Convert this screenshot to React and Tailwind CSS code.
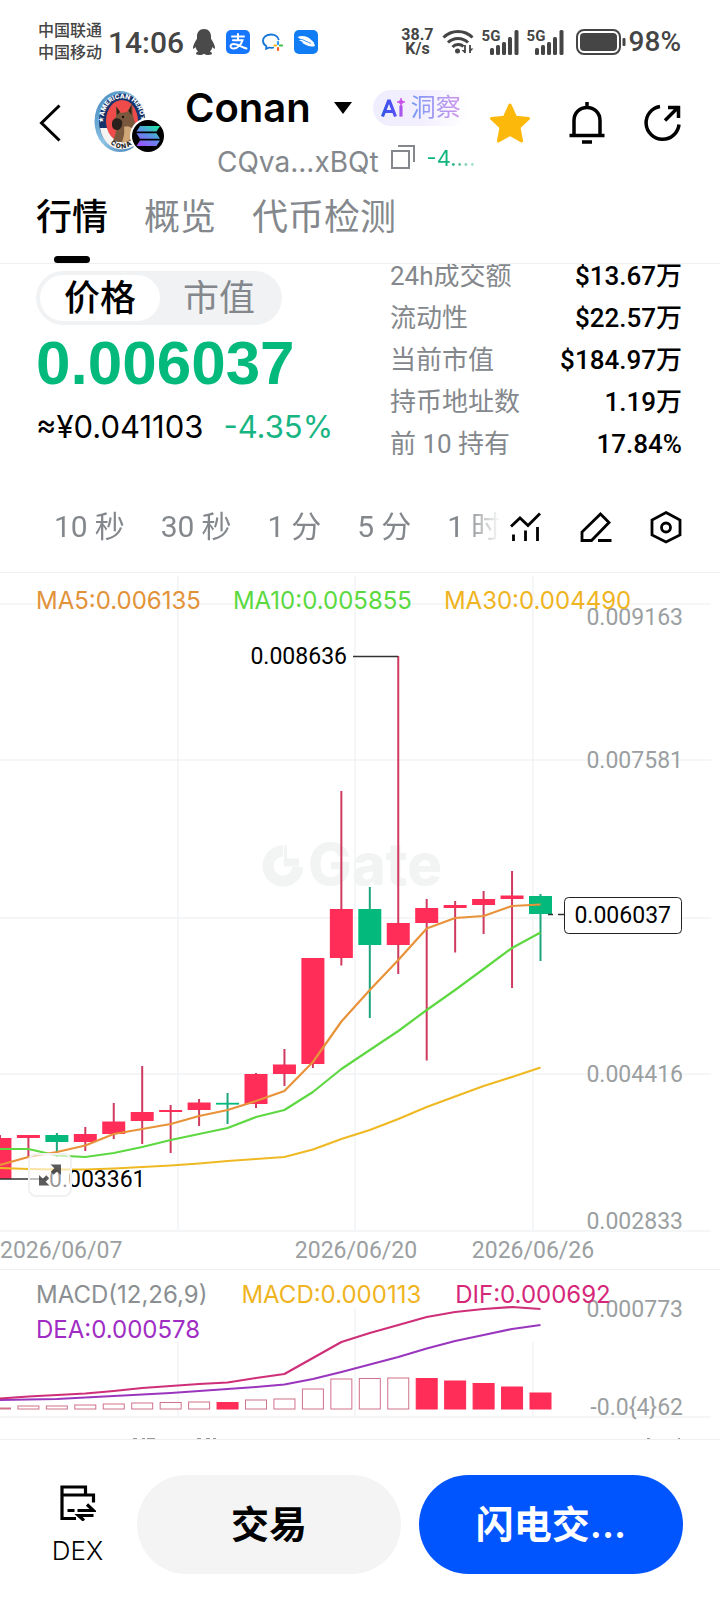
import React from "react";

const CJK = "font-[Inter,'Noto_Sans_CJK_SC',sans-serif]";
const DIN = "font-[Roboto,'Noto_Sans_CJK_SC',sans-serif]";

const STEP = 28.45;
const LAST_X = 540.5;
const slotX = (i) => LAST_X - STEP * (19 - i);

// [up, bodyTop, bodyBottom, wickTop, wickBottom]
const candles = [
  [1, 565, 606, 562, 606],
  [1, 562, 565, 562, 584],
  [0, 562, 569, 560, 584],
  [1, 561, 569, 554, 578],
  [1, 548.5, 561, 530, 566],
  [1, 539, 548, 493, 571],
  [1, 537, 539, 532, 580],
  [1, 529.5, 537, 526, 553],
  [0, 529.8, 531.6, 520, 551],
  [1, 501, 531, 500, 535],
  [1, 491.5, 501, 476, 513],
  [1, 385, 491, 385, 495],
  [1, 336, 385, 218, 392.5],
  [0, 336, 372, 314, 445],
  [1, 350, 372, 83, 401],
  [1, 335, 350, 326, 487.5],
  [1, 332, 335, 328, 379.5],
  [1, 326, 332, 318, 361],
  [1, 322.5, 326, 298, 415],
  [0, 323, 341, 321, 388],
];

const ma5 = [592, 584, 579, 572.5, 561, 556, 551, 543, 537, 528, 518, 489, 448.5, 417, 387, 355.5, 345, 343, 333, 331.5];
const ma10 = [576, 576, 582.5, 584, 580, 574, 567, 561, 555, 544, 537, 519, 496, 477, 458, 437, 417, 396, 375, 359.5];
const ma30 = [595, 596, 596.5, 596.5, 595.5, 594, 592.5, 590.5, 588, 586, 584, 576.5, 566, 557, 546, 534, 523.5, 513, 504, 494.5];

const dif = [128.5, 126.5, 125, 123.5, 121, 118, 116, 114, 112.5, 108, 104, 88, 72, 63, 55, 47, 42, 39, 37, 39];
const dea = [130, 129.5, 129, 127.5, 126, 124.5, 123, 121, 119, 117, 114.5, 109, 102, 94.5, 87, 78.5, 71, 65, 59, 55];

// [top, filled]
const bars = [
  [138, 0], [136, 0], [136, 0], [135, 0], [134, 0], [133, 0], [132.5, 0], [132, 0], [132.5, 1], [130, 0],
  [129, 0], [119, 0], [109, 0], [108.5, 0], [108, 0], [108.5, 1], [111, 1], [113.5, 1], [117, 1], [123, 1],
];

const line = (ys) => ys.map((y, i) => `${slotX(i).toFixed(1)},${y}`).join(" ");

function StatusBar() {
  return (
    <div className={`flex h-20 items-center pt-1 pr-[39px] pl-[38px] text-[#454545] ${DIN}`}>
      <div className="text-[16px] leading-[22px] font-medium">
        <div>中国联通</div>
        <div>中国移动</div>
      </div>
      <div className="ml-1.5 text-[30px] font-medium">14:06</div>
      <svg className="ml-2 h-7 w-6" viewBox="0 0 24 28" fill="#4a4a4a">
        <path d="M12 1c-4.600 0-7 3.300-7 7.200v2.600C3.300 13.300 1.400 16.600 1 19.500c-.2 1.800.9 1.500 2.600-.6.4 1.900 1.200 3.300 2.400 4.500-1.400.6-2 1.400-2 2.200 0 1.100 1.400 1.400 3.500 1.400 2 0 3.600-.4 4.500-1.200.9.8 2.500 1.200 4.500 1.200 2.100 0 3.500-.3 3.500-1.400 0-.8-.6-1.600-2-2.200 1.200-1.200 2-2.600 2.400-4.500 1.700 2.100 2.800 2.400 2.600.6-.4-2.900-2.300-6.200-4-8.700V8.200C19 4.300 16.600 1 12 1z" />
      </svg>
      <svg className="ml-[10px] h-6 w-6" viewBox="0 0 24 24">
        <rect width="24" height="24" rx="5" fill="#1676fe" />
        <g fill="none" stroke="#fff" strokeWidth="2" strokeLinecap="round">
          <path d="M6 6.500h12M12 4v6M7 10.200h9.500c-1 3.600-4.500 8-8.500 8.400-4.500.4-4.500-4.600-.5-4.600 4 0 8 3 13 4.500" />
        </g>
      </svg>
      <svg className="ml-[10px] h-6 w-6" viewBox="0 0 24 24" fill="none">
        <path d="M14 17.500c-1.500.5-3.300.4-4.800 0L6 19l.4-2.700C4 15 3 13 3 10.800 3 7 6.500 4.500 11 4.500c4 0 7.300 2.200 7.800 5.700" stroke="#1676d8" strokeWidth="1.800" strokeLinejoin="round" />
        <path d="M18 12v2.200" stroke="#2f9bff" strokeWidth="2.200" strokeLinecap="round" />
        <path d="M20 15.500h2" stroke="#3fbf3f" strokeWidth="2.200" strokeLinecap="round" />
        <path d="M18 18v2" stroke="#ff5a1f" strokeWidth="2.200" strokeLinecap="round" />
        <path d="M14.500 15.500h1.500" stroke="#ffb400" strokeWidth="2.200" strokeLinecap="round" />
      </svg>
      <svg className="ml-[10px] h-6 w-6" viewBox="0 0 24 24">
        <rect width="24" height="24" rx="5" fill="#117df5" />
        <path d="M3.500 7c4-1.800 8.500-1.200 11.500 1l4.500 4 1.500 4c-3 1-6.500.6-9-.9l-4.500-2.600 2.200.1-5-2.600 3 .1z" fill="#fff" />
        <path d="M7 9l10 4.500" stroke="#117df5" strokeWidth="0.800" />
      </svg>

      <div className="ml-auto text-center text-[16px] leading-[14px] font-bold">
        <div>38.7</div>
        <div>K/s</div>
      </div>
      <svg className="ml-2 h-6 w-8" viewBox="0 0 32 24" fill="none" stroke="#454545" strokeWidth="3">
        <path d="M1.500 7.500C9.500-.5 22.500-.5 30.500 7.500" />
        <path d="M6 12.500C11.500 7 20.500 7 26 12.500" />
        <path d="M10.500 17c3-3 8-3.500 11-.5" />
        <circle cx="15.500" cy="21" r="2.500" fill="#454545" stroke="none" />
        <path d="M23 15v8M28 15v8" strokeWidth="1.800" />
        <path d="M19.500 20h3.500v3.500zM31.500 18.500H28V22z" fill="#454545" stroke="none" />
      </svg>
      {[0, 1].map((n) => (
        <div key={n} className="ml-2 flex h-[26px] w-[37px]">
          <span className="w-[16px] text-[15px] leading-[14px] font-bold">5G</span>
          <svg className="-ml-2 h-[26px] w-[29px] shrink-0" viewBox="0 0 29 26" fill="#454545">
            <rect x="0" y="19" width="4" height="7" rx="1.500" />
            <rect x="6" y="16" width="4" height="10" rx="1.500" />
            <rect x="12" y="13" width="4" height="13" rx="1.500" />
            <rect x="18" y="8" width="4" height="18" rx="1.500" />
            <rect x="24.500" y="1" width="4" height="25" rx="1.500" />
          </svg>
        </div>
      ))}
      <svg className="ml-3 h-[26px] w-[51px]" viewBox="0 0 51 26">
        <rect x="1" y="1" width="43" height="24" rx="7" fill="none" stroke="#454545" strokeWidth="2" />
        <rect x="4" y="4" width="37" height="18" rx="4" fill="#454545" />
        <rect x="46.500" y="9" width="3" height="8" rx="1" fill="#454545" />
      </svg>
      <div className="ml-0.5 text-[28px] font-medium">98%</div>
    </div>
  );
}

function TokenLogo() {
  return (
    <svg className="h-[66px] w-[74px] shrink-0" viewBox="0 0 74 66">
      <defs>
        <linearGradient id="rim" x1="0" y1="0" x2="1" y2="1">
          <stop offset="0" stopColor="#3c82b8" />
          <stop offset="0.500" stopColor="#8cc4e6" />
          <stop offset="1" stopColor="#2f6ea8" />
        </linearGradient>
        <linearGradient id="sol" gradientUnits="userSpaceOnUse" x1="62" y1="34" x2="48" y2="58">
          <stop offset="0" stopColor="#19f0a0" />
          <stop offset="0.500" stopColor="#5f8fe8" />
          <stop offset="1" stopColor="#a04bff" />
        </linearGradient>
        <path id="arcTop" d="M9.500 38C8 18 16 8.500 28 8.500S48 18 46.500 38" />
        <path id="arcBottom" d="M10 42c4 11 10 16.500 17.500 16.500S41 53 45 44" />
      </defs>
      <ellipse cx="26" cy="31.500" rx="25.500" ry="30.500" fill="url(#rim)" />
      <ellipse cx="28" cy="31.500" rx="23" ry="28" fill="#17336b" />
      <path d="M6 38h44c-2 13-11 21.500-22 21.500S8 51 6 38z" fill="#f4f4f2" />
      <ellipse cx="28" cy="31" rx="16" ry="21" fill="#ee4b4a" />
      <path d="M19 51c2-5 3-8 3-12l-3-4c-1-3 1-6 3-8l0-11 5 7 6-1 5-9 1 13c2 7 4 13 4 18-3 5-7 8-12 8-4 0-9 0-12-1z" fill="#7a583e" />
      <path d="M30 37c4-2 8 0 11 5-2 7-7 10-13 11 1-5 3-8 2-16z" fill="#d0a878" />
      <path d="M19 30c3-3 7-2 9 1 1 4-1 8-4 9-4 0-6-2-6-5 0-2 0-4 1-5z" fill="#2a211c" />
      <circle cx="29" cy="27" r="1.200" fill="#111" />
      <path d="M22.500 17l3.500 5-3 3zM37.500 15l-3 6 3 4z" fill="#2e2018" />
      <text className="font-[Inter,sans-serif]" fontSize="6.500" fontWeight="800" fill="#fff">
        <textPath href="#arcTop" startOffset="6%">★AMERICAN HERO★</textPath>
      </text>
      <text className="font-[Inter,sans-serif]" fontSize="6.500" fontWeight="800" fill="#222">
        <textPath href="#arcBottom" startOffset="26%">C O N A N</textPath>
      </text>
      <circle cx="54" cy="46" r="18" fill="#fff" />
      <circle cx="54" cy="46" r="16" fill="#000" />
      <path d="M46 36h20l-3.500 5.500h-20zM42.500 43.300h20L66 48.800H46zM46 50.600h20l-3.500 5.500h-20z" fill="url(#sol)" />
    </svg>
  );
}

function Header() {
  return (
    <header className="flex h-[104px] items-start pt-[5px] pr-[39px] pl-9">
      <div className="flex h-[76px] items-center">
        <button aria-label="返回" className="mr-[30px] flex h-10 w-7 items-center">
          <svg className="h-10 w-7" viewBox="0 0 28 40" fill="none" stroke="#000" strokeWidth="3">
            <path d="M23.500 2.500L5.500 20l18 17.500" />
          </svg>
        </button>
        <TokenLogo />
      </div>
      <div className="ml-[17px] flex w-[288px] flex-col gap-2">
        <div className="flex h-[46px] items-center">
          <h1 className={`text-[40px] leading-[46px] font-semibold text-black ${CJK}`}>Conan</h1>
          <svg className="ml-[22px] h-3 w-5" viewBox="0 0 20 12">
            <path d="M1 0h18l-9 12z" />
          </svg>
          <button className={`ml-5 flex h-9 items-center gap-1.5 rounded-full bg-linear-to-r from-[#efeefe] via-[#f3effe] to-white px-2 text-[25px] ${CJK}`}>
            <svg className="h-5 w-6 shrink-0" viewBox="0 0 24 20">
              <defs>
                <linearGradient id="ai" gradientUnits="userSpaceOnUse" x1="0" x2="24" y1="0" y2="0">
                  <stop offset="0" stopColor="#2f55e8" />
                  <stop offset="0.600" stopColor="#5a50f5" />
                  <stop offset="1" stopColor="#e05be8" />
                </linearGradient>
              </defs>
              <g fill="none" stroke="url(#ai)" strokeWidth="3.200">
                <path d="M1.500 18.500L7.500 3h1L14.500 18.500M4.500 13.500h7.500" />
                <path d="M20 7.500v11.100" />
              </g>
              <path d="M20 0c.5 2.600 1.400 3.500 4 4-2.600.5-3.500 1.400-4 4-.5-2.600-1.400-3.500-4-4 2.600-.5 3.500-1.400 4-4z" fill="#c94fe6" stroke="#c94fe6" strokeWidth="0.800" />
            </svg>
            <span className="bg-linear-to-r from-[#7399f4] to-[#cf94ee] bg-clip-text whitespace-nowrap text-transparent">洞察</span>
          </button>
        </div>
        <div className={`flex h-[46px] items-center pl-8 text-[28px] text-[#84888c] ${CJK}`}>
          <span>CQva...xBQt</span>
          <button aria-label="复制" className="ml-3 pb-[10px]">
            <svg className="h-6 w-6" viewBox="0 0 24 24" fill="none" stroke="#84888c" strokeWidth="2">
              <rect x="1" y="6" width="17" height="17" />
              <path d="M7 1h16v16" />
            </svg>
          </button>
          <span className="ml-3 bg-linear-to-r from-[#0fb47c] from-50% to-[#b9e8d8] bg-clip-text pb-2 text-[22px] leading-8 text-transparent">-4....</span>
        </div>
      </div>
      <div className="ml-auto flex h-[76px] items-center gap-[38px]">
        <button aria-label="收藏">
          <svg className="h-[42px] w-[42px]" viewBox="0 0 42 42">
            <path d="M21 3l5.600 12.200L39.500 16.500 30 25.500 32.600 39 21 32.500 9.400 39 12 25.500 2.500 16.500l12.900-1.300z" fill="#fdb90b" stroke="#fdb90b" strokeWidth="3" strokeLinejoin="round" />
          </svg>
        </button>
        <button aria-label="提醒">
          <svg className="h-[42px] w-9" viewBox="0 0 36 42" fill="none" stroke="#000" strokeWidth="3.500">
            <path d="M18 0v5M5 33V18.500C5 10.500 11 5.500 18 5.500S31 10.500 31 18.500V33M.5 33.500h35M13 40h10" />
          </svg>
        </button>
        <button aria-label="分享">
          <svg className="h-[38px] w-[38px]" viewBox="0 0 38 38" fill="none" stroke="#000" strokeWidth="3.500">
            <path d="M17 2.500A16.500 16.500 0 1 0 36 20.500M22 16.500L35 3.500M25 3.500h10.500v10.500" />
          </svg>
        </button>
      </div>
    </header>
  );
}

function Tabs() {
  return (
    <nav className={`flex h-[80px] gap-9 border-b border-[#eeeff0] px-9 text-[36px] leading-[66px] text-[#84888c] ${CJK}`}>
      <button className="flex flex-col items-center justify-between font-medium text-black">
        行情
        <span className="h-[7px] w-9 rounded-full bg-black" />
      </button>
      <button className="flex">概览</button>
      <button className="flex">代币检测</button>
    </nav>
  );
}

const stats = [
  ["24h成交额", "$13.67万"],
  ["流动性", "$22.57万"],
  ["当前市值", "$184.97万"],
  ["持币地址数", "1.19万"],
  ["前 10 持有", "17.84%"],
];

function Summary() {
  return (
    <section className="flex h-[217px] justify-between overflow-hidden pr-[38px] pl-9">
      <div className="pt-[7px]">
        <div className={`flex h-[54px] w-[246px] items-center rounded-full bg-[#f0f2f4] p-1 text-[36px] leading-[44px] text-[#84888c] ${CJK}`}>
          <button className="h-[46px] w-[120px] rounded-full bg-white font-medium text-black">价格</button>
          <button className="h-[46px] flex-1">市值</button>
        </div>
        <div className="mt-[6px] font-['Liberation_Sans',sans-serif] text-[62px] leading-[64px] font-bold text-[#04b97c]">0.006037</div>
        <div className={`mt-[14px] flex gap-5 text-[31px] leading-9 ${CJK}`}>
          <span className="text-black">≈¥0.041103</span>
          <span className="text-[#17b583]">-4.35%</span>
        </div>
      </div>
      <dl className={`-mt-[9px] w-[292px] text-[26px] leading-[42px] ${DIN}`}>
        {stats.map(([label, value]) => (
          <div key={label} className="flex justify-between">
            <dt className="text-[#84888c]">{label}</dt>
            <dd className="font-medium text-black">{value}</dd>
          </div>
        ))}
      </dl>
    </section>
  );
}

const periods = [["10", "秒"], ["30", "秒"], ["1", "分"], ["5", "分"], ["1", "时"]];

function PeriodBar() {
  return (
    <div className="flex h-[92px] items-center justify-between border-b border-[#eeeff0] pr-[38px] pl-[54px]">
      <div className={`flex w-[447px] gap-9 overflow-hidden mask-r-from-92% text-[30px] text-[#84888c] ${DIN}`}>
        {periods.map(([n, unit]) => (
          <button key={n + unit} className="flex shrink-0 gap-[7px]">
            <span>{n}</span>
            <span>{unit}</span>
          </button>
        ))}
      </div>
      <div className="flex items-center gap-[38px]">
        <button aria-label="指标">
          <svg className="h-8 w-8" viewBox="0 0 32 32" fill="none" stroke="#000" strokeWidth="2.800">
            <path d="M1 15.500l9-8.500 8 7.500L30 2.500M3.500 23.500V30M15.500 19.500V30M27.500 16V30" />
          </svg>
        </button>
        <button aria-label="画线">
          <svg className="h-8 w-8" viewBox="0 0 32 32" fill="none" stroke="#000" strokeWidth="2.800">
            <path d="M20.500 3l8.500 8.500-17.500 18H2V21zM18 29.500h13.500" />
          </svg>
        </button>
        <button aria-label="设置">
          <svg className="h-[34px] w-8" viewBox="0 0 32 34" fill="none" stroke="#000" strokeWidth="2.800">
            <path d="M16 2.500L30 10v15L16 32 2 25V10z" />
            <circle cx="16" cy="17.500" r="4.500" />
          </svg>
        </button>
      </div>
    </div>
  );
}

function PriceChart() {
  return (
    <section className="relative border-b border-[#eeeff0]">
      <svg className="block w-full" viewBox="0 0 720 696">
        <g stroke="#f2f3f4" strokeWidth="1.500">
          {[31, 187, 345, 501, 658].map((y) => (
            <line key={y} x1="0" x2="711" y1={y} y2={y} />
          ))}
          {[178, 355, 533].map((x) => (
            <line key={x} x1={x} x2={x} y1="3" y2="658" />
          ))}
        </g>
        <g fill="#f2f4f4">
          <path d="M283 278A15 15 0 1 0 298 294" fill="none" stroke="#f2f4f4" strokeWidth="11" />
          <path d="M284 272.500h3v13h12v8h-15z" />
          <text x="308" y="312" fontSize="58" fontWeight="800" className="font-[Inter,sans-serif]">Gate</text>
        </g>
        {candles.map(([up, top, bottom, high, low], i) => (
          <g key={i}>
            <rect x={slotX(i) - 1} y={high} width="2" height={low - high} fill={up ? "#cf3a5f" : "#1ea57c"} />
            <rect x={slotX(i) - 11.500} y={top} width="23" height={bottom - top} fill={up ? "#ff2d58" : "#04b97c"} />
          </g>
        ))}
        <g fill="none" strokeWidth="2.200" strokeLinejoin="round">
          <polyline points={line(ma30)} stroke="#efb924" />
          <polyline points={line(ma10)} stroke="#5ed842" />
          <polyline points={line(ma5)} stroke="#e8923a" />
        </g>
        <g stroke="#333" strokeWidth="1.500" fill="none">
          <path d="M353 83.500h45M0 606h46M548 341.500h5M558 341.500h6" />
        </g>
        <rect x="564.500" y="324.500" width="117" height="36" rx="4" fill="#fff" stroke="#222" />
        <g fontSize="23" className="font-[Roboto,sans-serif]">
          <g fill="#000">
            <text x="347" y="91" textAnchor="end">0.008636</text>
            <text x="49" y="614">0.003361</text>
            <text x="671" y="350" textAnchor="end">0.006037</text>
          </g>
          <g fill="#9b9fa1">
            <text x="683" y="52" textAnchor="end">0.009163</text>
            <text x="683" y="195" textAnchor="end">0.007581</text>
            <text x="683" y="509" textAnchor="end">0.004416</text>
            <text x="683" y="656" textAnchor="end">0.002833</text>
            <text x="0" y="685">2026/06/07</text>
            <text x="356" y="685" textAnchor="middle">2026/06/20</text>
            <text x="533" y="685" textAnchor="middle">2026/06/26</text>
          </g>
        </g>
      </svg>
      <div className={`absolute inset-x-9 top-3 flex gap-8 text-[24px] leading-8 ${CJK}`}>
        <span className="text-[#e2933a]">MA5:0.006135</span>
        <span className="text-[#5bd93f]">MA10:0.005855</span>
        <span className="text-[#efb41f]">MA30:0.004490</span>
      </div>
      <button aria-label="全屏" className="absolute bottom-[72px] left-7 flex size-11 items-center justify-center rounded-lg border-2 border-[#f1f1f1] bg-white/60">
        <svg className="size-6" viewBox="0 0 24 24" fill="#333" fillOpacity="0.800">
          <path d="M12.500 1.500H23V12l-3.800-3.800-3.500 3.500-2.900-2.900 3.500-3.500zM11.500 22.500H1V12l3.800 3.800 3.500-3.500 2.900 2.900-3.500 3.500z" />
        </svg>
      </button>
    </section>
  );
}

function MacdChart() {
  return (
    <section className="relative border-b border-[#eeeff0]">
      <svg className="block w-full" viewBox="0 0 720 169">
        <g stroke="#f2f3f4" strokeWidth="1.500">
          <line x1="0" x2="711" y1="147" y2="147" />
          <line x1="178" x2="178" y1="72" y2="147" />
          <line x1="355" x2="355" y1="38" y2="147" />
          <line x1="533" x2="533" y1="72" y2="147" />
        </g>
        {bars.map(([top, filled], i) => (
          <rect
            key={i}
            x={slotX(i) - 10.500}
            y={top}
            width="21"
            height={139 - top}
            fill={filled ? "#ff2d58" : "#fff"}
            stroke={filled ? "#ff2d58" : "#d0708a"}
            strokeWidth="1"
          />
        ))}
        <g fill="none" strokeWidth="2.200" strokeLinejoin="round">
          <polyline points={line(dea)} stroke="#9a36bd" />
          <polyline points={line(dif)} stroke="#cf2f78" />
        </g>
        <g fontSize="23" fill="#9b9fa1" className="font-[Roboto,sans-serif]">
          <text x="683" y="47" textAnchor="end">0.000773</text>
          <text x="683" y="145" textAnchor="end">-0.0{"{4}"}62</text>
        </g>
        <path d="M133 168.500h4M142 168.500h3M147 168.500h8M197 168.500h4M206 168.500h4M213 168.500h3M647 168.500h3M678 168.500h2" stroke="#999" strokeWidth="1" />
      </svg>
      <div className={`absolute inset-x-9 top-[7px] flex flex-wrap gap-x-[34px] text-[24px] leading-[35px] ${CJK}`}>
        <span className="text-[#8b8f92]">MACD(12,26,9)</span>
        <span className="text-[#efb41f]">MACD:0.000113</span>
        <span className="text-[#d5277a]">DIF:0.000692</span>
        <span className="text-[#a02cc4]">DEA:0.000578</span>
      </div>
    </section>
  );
}

function ActionBar() {
  return (
    <footer className={`flex items-center gap-[18px] py-[35px] pr-[37px] pl-9 ${CJK}`}>
      <button className="flex w-[83px] shrink-0 flex-col items-center gap-3 pt-1 text-[26px] leading-9 font-light text-black">
        <svg className="h-9 w-9" viewBox="0 0 36 36" fill="none" stroke="#000" strokeWidth="3.200">
          <path d="M16 33.500H2V2h23.500v8M2 10h31.500v7.500M7.500 25.500h7M17.500 25.500h16l-6.500-6M33.500 30.500h-15l5.500 5" />
        </svg>
        DEX
      </button>
      <button className="h-[99px] flex-1 rounded-full bg-[#f4f4f4] text-[38px] font-bold text-black">交易</button>
      <button className="h-[99px] flex-1 rounded-full bg-[#0055ff] text-[38px] font-semibold text-white">闪电交...</button>
    </footer>
  );
}

export default function App() {
  return (
    <main className="min-h-screen w-full bg-white">
      <StatusBar />
      <Header />
      <Tabs />
      <Summary />
      <PeriodBar />
      <PriceChart />
      <MacdChart />
      <ActionBar />
    </main>
  );
}
